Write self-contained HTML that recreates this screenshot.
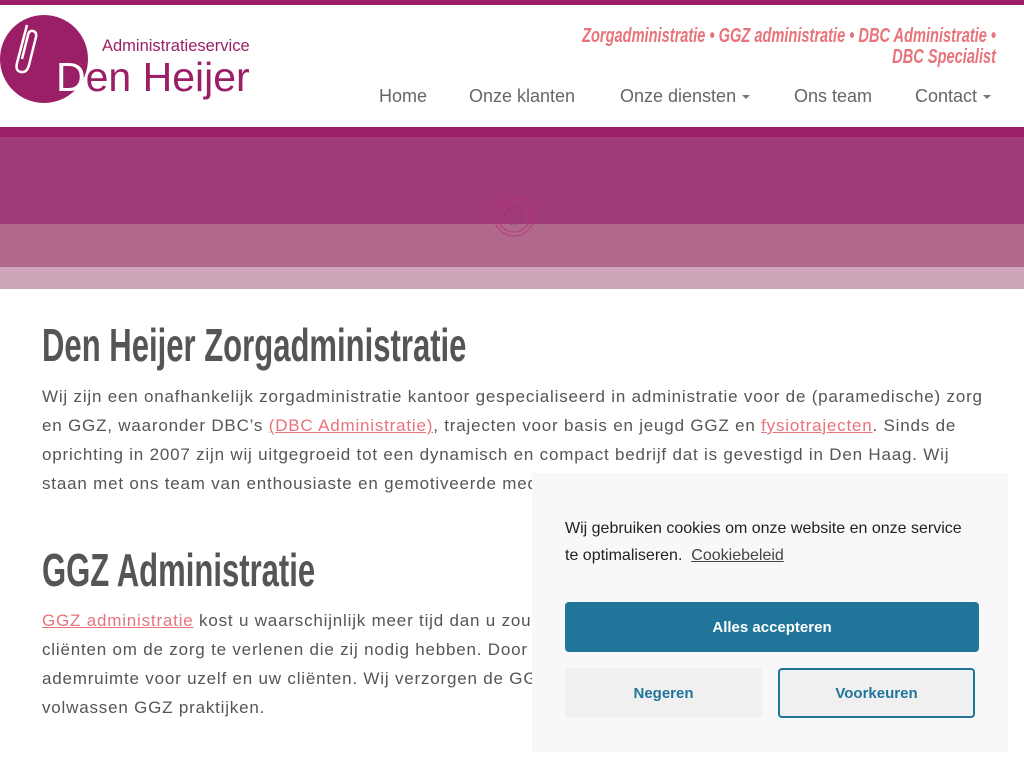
<!DOCTYPE html>
<html><head><meta charset="utf-8"><style>
*{margin:0;padding:0;box-sizing:border-box}
body{width:1024px;height:768px;overflow:hidden;background:#fff;font-family:"Liberation Sans",sans-serif;color:#555;position:relative}
.top{position:absolute;top:0;left:0;width:1024px;height:5px;background:#9b1f66}
.tag{position:absolute;right:28px;top:26px;text-align:right;color:#e8737a;font-weight:bold;font-style:italic;font-size:20px;line-height:21px;transform:scaleX(.73);transform-origin:right;white-space:nowrap}
.nav{position:absolute;top:86px;font-size:18px;color:#666}
.nav span{position:absolute;white-space:nowrap}
.car{display:inline-block;border-left:4px solid transparent;border-right:4px solid transparent;border-top:4px solid #777;vertical-align:middle;margin-left:6px}
.b1{position:absolute;top:127px;left:0;width:1024px;height:10px;background:#9b1f66}
.b2{position:absolute;top:137px;left:0;width:1024px;height:87px;background:#a03a78}
.b3{position:absolute;top:224px;left:0;width:1024px;height:43px;background:#b0688b}
.b4{position:absolute;top:267px;left:0;width:1024px;height:22px;background:#cfa6b9}
h1{position:absolute;left:42px;font-family:"Liberation Sans Narrow","Liberation Sans",sans-serif;font-weight:bold;font-size:46px;color:#555;white-space:nowrap;transform:scaleX(.675);transform-origin:left}
.p{position:absolute;left:42px;font-size:17px;line-height:29px;color:#555;white-space:nowrap;letter-spacing:.8px}
a{color:#e8737a;text-decoration:underline}
.ck{position:absolute;left:532px;top:473px;width:476px;height:279px;background:#f8f8f8}
.ck p{position:absolute;left:33px;top:42px;font-size:16px;line-height:27px;color:#222}
.ck p a{color:#444}
.btn{position:absolute;border-radius:4px;font-weight:bold;font-size:15px;display:flex;align-items:center;justify-content:center}
</style></head><body>
<div class="top"></div>
<svg style="position:absolute;left:0;top:15px" width="90" height="90" viewBox="0 0 90 90"><circle cx="44" cy="44" r="44" fill="#9b1f66"/><path d="M27 10 L17 48 Q15 56 21 57 Q27 58 29 50 L36 22 Q37 17 33 16 Q29 15 28 20 L22 44" fill="none" stroke="#fff" stroke-width="2.5"/></svg>
<div style="position:absolute;left:102px;top:37px;font-size:16.5px;color:#9b1f66">Administratieservice</div>
<div style="position:absolute;left:56px;top:54px;font-size:41px;color:#9b1f66"><span style="color:#fff">D</span>en Heijer</div>
<div class="tag">Zorgadministratie • GGZ administratie • DBC Administratie •<br>DBC Specialist</div>
<div class="nav"><span style="left:379px">Home</span><span style="left:469px">Onze klanten</span><span style="left:620px">Onze diensten<i class="car"></i></span><span style="left:794px">Ons team</span><span style="left:915px">Contact<i class="car"></i></span></div>
<div class="b1"></div><div class="b2"></div><div class="b3"></div><div class="b4"></div>
<svg style="position:absolute;left:492px;top:194px" width="44" height="44"><circle cx="22" cy="22" r="20" fill="none" stroke="#b8347a" stroke-width="1.5" opacity=".6"/><circle cx="22" cy="22" r="16" fill="none" stroke="#b8347a" stroke-width="1.5" opacity=".6"/><circle cx="22" cy="22" r="9" fill="none" stroke="#8a2a60" stroke-width="1" stroke-dasharray="2 2" opacity=".6"/></svg>
<h1 style="top:318px">Den Heijer Zorgadministratie</h1>
<div class="p" style="top:382px">Wij zijn een onafhankelijk zorgadministratie kantoor gespecialiseerd in administratie voor de (paramedische) zorg</div>
<div class="p" style="top:411px">en GGZ, waaronder DBC’s <a>(DBC Administratie)</a>, trajecten voor basis en jeugd GGZ en <a>fysiotrajecten</a>. Sinds de</div>
<div class="p" style="top:440px">oprichting in 2007 zijn wij uitgegroeid tot een dynamisch en compact bedrijf dat is gevestigd in Den Haag. Wij</div>
<div class="p" style="top:469px">staan met ons team van enthousiaste en gemotiveerde  medewerkers</div>
<h1 style="top:543px">GGZ Administratie</h1>
<div class="p" style="top:606px"><a>GGZ administratie</a> kost u waarschijnlijk meer tijd dan u zou</div>
<div class="p" style="top:635px">cliënten om de zorg te verlenen die zij nodig hebben. Door u</div>
<div class="p" style="top:664px">ademruimte voor uzelf en uw cliënten. Wij verzorgen de GGZ</div>
<div class="p" style="top:693px">volwassen GGZ praktijken.</div>
<div class="ck">
<p>Wij gebruiken cookies om onze website en onze service<br>te optimaliseren.&nbsp; <a>Cookiebeleid</a></p>
<div class="btn" style="left:33px;top:129px;width:414px;height:50px;background:#21759b;color:#fff">Alles accepteren</div>
<div class="btn" style="left:33px;top:195px;width:197px;height:50px;background:#f0f0f0;color:#21759b">Negeren</div>
<div class="btn" style="left:246px;top:195px;width:197px;height:50px;background:#f0f0f0;color:#21759b;border:2px solid #21759b">Voorkeuren</div>
</div>
</body></html>
